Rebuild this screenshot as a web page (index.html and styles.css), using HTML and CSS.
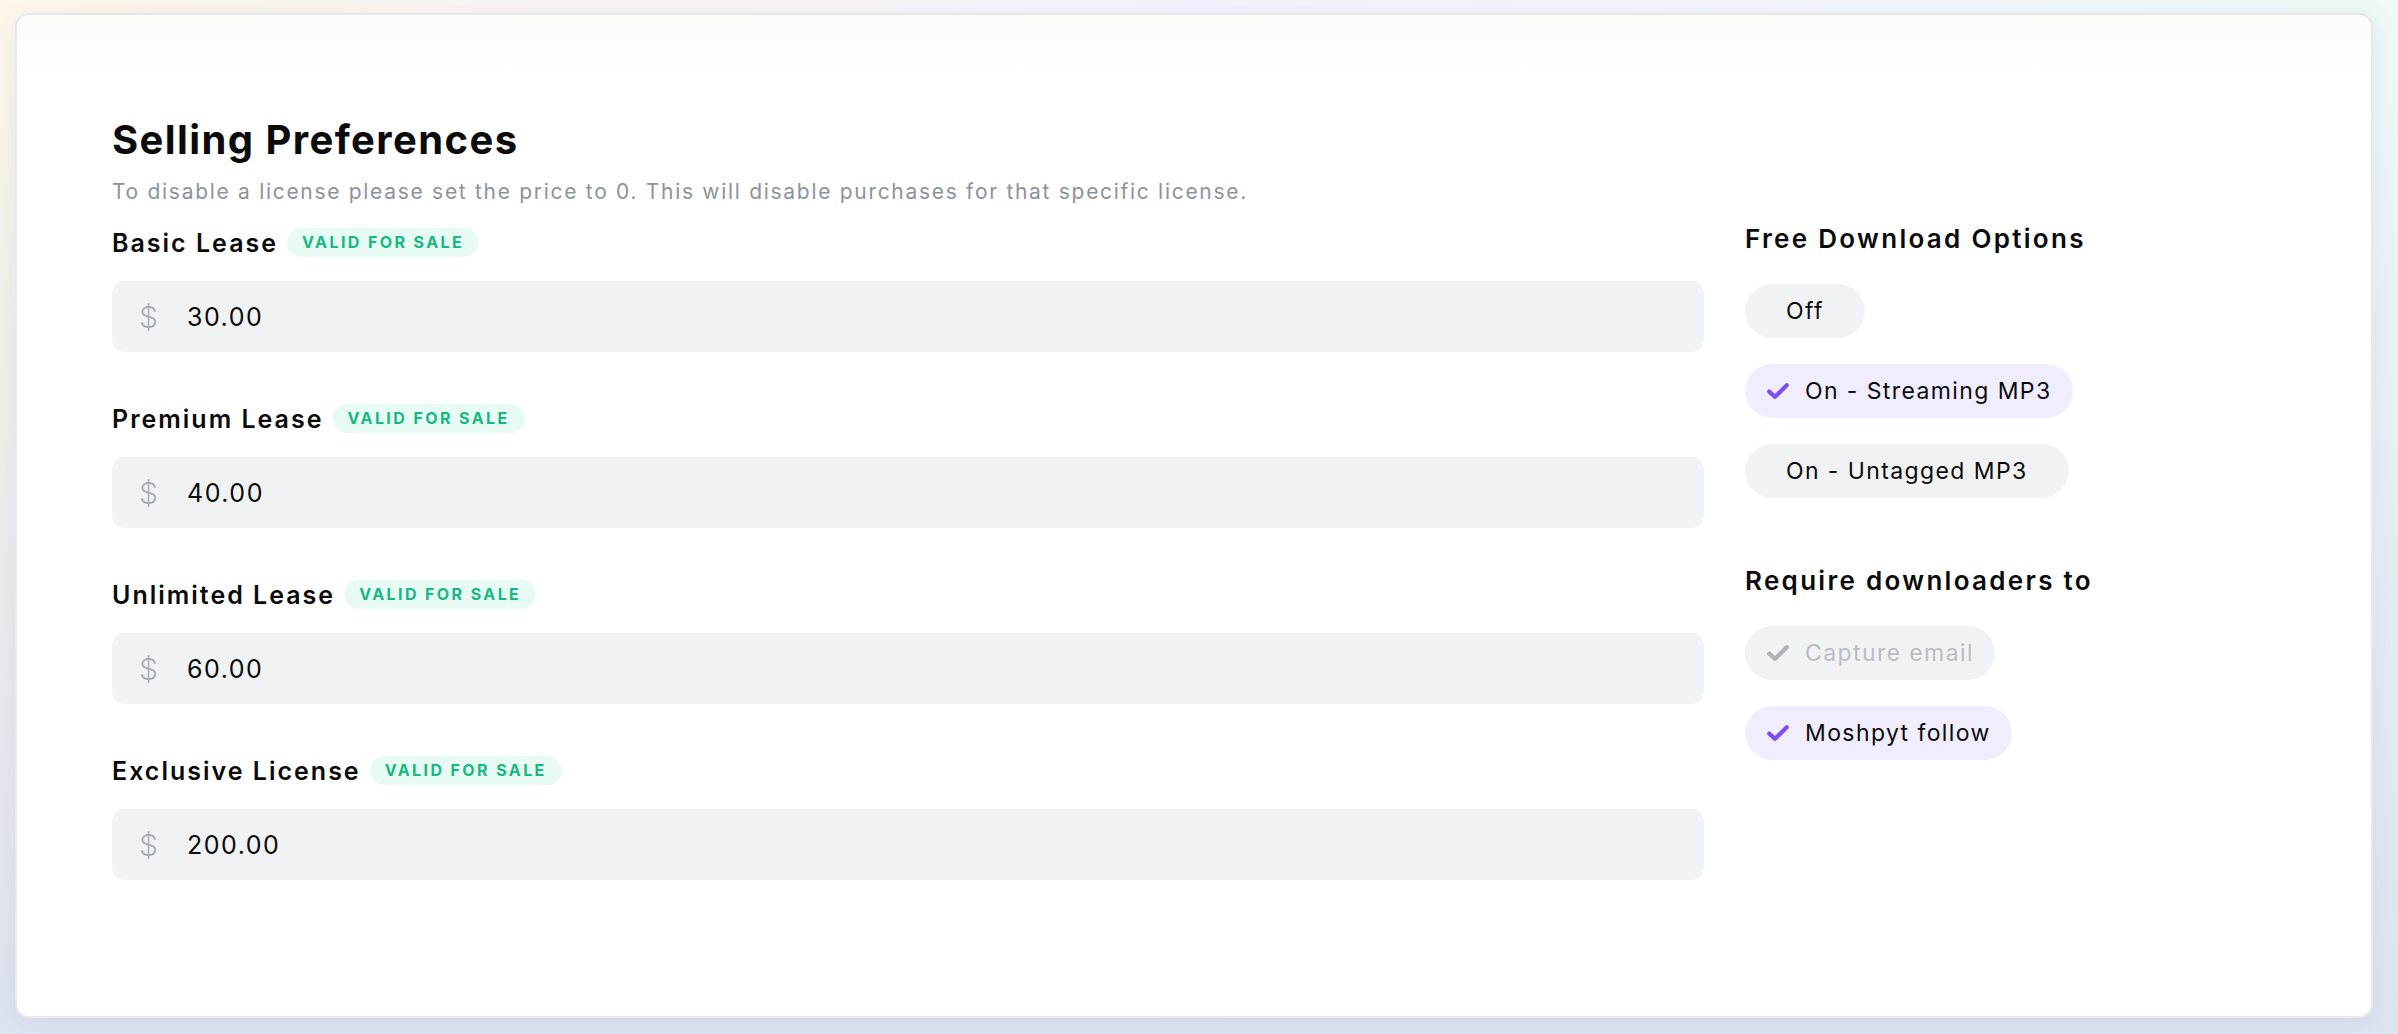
FILE: index.html
```html
<!DOCTYPE html>
<html lang="en">
<head>
  <meta charset="UTF-8" />
  <meta name="viewport" content="width=device-width, initial-scale=1.0" />
  <title>Selling Preferences</title>
  <link rel="stylesheet" href="styles.css">
</head>
<body>
  <div class="card">
    <h1>Selling Preferences</h1>
    <p class="subtitle">To disable a license please set the price to 0. This will disable purchases for that specific license.</p>

    <div class="columns">
      <div class="licenses">
        <div class="field">
          <div class="field-label">Basic Lease <span class="badge">Valid for sale</span></div>
          <div class="price"><span class="currency">$</span><input type="text" value="30.00" /></div>
        </div>
        <div class="field">
          <div class="field-label">Premium Lease <span class="badge">Valid for sale</span></div>
          <div class="price"><span class="currency">$</span><input type="text" value="40.00" /></div>
        </div>
        <div class="field">
          <div class="field-label">Unlimited Lease <span class="badge">Valid for sale</span></div>
          <div class="price"><span class="currency">$</span><input type="text" value="60.00" /></div>
        </div>
        <div class="field">
          <div class="field-label">Exclusive License <span class="badge">Valid for sale</span></div>
          <div class="price"><span class="currency">$</span><input type="text" value="200.00" /></div>
        </div>
      </div>

      <div class="options">
        <h2>Free Download Options</h2>
        <div class="pills">
          <button class="pill">Off</button>
          <button class="pill active">
            <svg viewBox="0 0 24 24"><polyline points="4.5 12.5 9.5 17 19.5 7"/></svg>
            On - Streaming MP3
          </button>
          <button class="pill">On - Untagged MP3</button>
        </div>

        <h2>Require downloaders to</h2>
        <div class="pills">
          <button class="pill disabled">
            <svg viewBox="0 0 24 24"><polyline points="4.5 12.5 9.5 17 19.5 7"/></svg>
            Capture email
          </button>
          <button class="pill active">
            <svg viewBox="0 0 24 24"><polyline points="4.5 12.5 9.5 17 19.5 7"/></svg>
            Moshpyt follow
          </button>
        </div>
      </div>
    </div>
  </div>
</body>
</html>
```

FILE: styles.css
```css
html, body {
  height: 100%;
}
body {
  margin: 0;
  padding: 13px 25px 16px 15px;
  box-sizing: border-box;
  display: flex;
  flex-direction: column;
  font-family: Inter, "Noto Sans", Arial, sans-serif;
  color: #0b0b0c;
  background:
    linear-gradient(to bottom, rgba(221, 227, 239, 0) 0%, rgba(221, 227, 239, 0.5) 50%, #dde3ef 100%),
    linear-gradient(to right, #fdf7ea 0%, #f6f1fd 50%, #eef9f8 100%);
}
.card {
  flex: 1;
  background: linear-gradient(to bottom, #fdfbf8 0, #fff 60px);
  border: 2px solid #e7e8ec;
  border-radius: 14px;
  box-shadow: 0 4px 24px rgba(120, 135, 170, 0.12);
  padding: 103px 96px 0 95px;
}
h1 {
  margin: 0;
  font-size: 40px;
  line-height: 44px;
  font-weight: 700;
  letter-spacing: 1.4px;
}
.subtitle {
  margin: 16px 0 0;
  font-size: 21px;
  line-height: 28px;
  color: #8e929b;
  letter-spacing: 1.7px;
}
.columns {
  display: grid;
  grid-template-columns: 1592px 1fr;
  gap: 41px;
  margin-top: 22px;
}
.field {
  margin-bottom: 52px;
}
.field-label {
  display: flex;
  align-items: center;
  height: 29px;
  font-size: 25px;
  font-weight: 600;
  letter-spacing: 2px;
  margin-bottom: 24px;
}
.badge {
  margin-left: 9px;
  padding: 0 15px;
  height: 29px;
  line-height: 29px;
  border-radius: 15px;
  background: #e7faf3;
  color: #17b883;
  font-size: 16px;
  font-weight: 700;
  text-transform: uppercase;
  letter-spacing: 2.4px;
}
.price {
  display: flex;
  align-items: center;
  height: 71px;
  background: #f1f2f4;
  border-radius: 12px;
  padding-left: 27px;
}
.currency {
  width: 48px;
  color: #a9afb8;
  font-size: 30px;
  font-weight: 300;
}
.price input {
  flex: 1;
  border: none;
  background: transparent;
  font-family: inherit;
  font-size: 25px;
  color: #0b0b0c;
  outline: none;
  padding: 0;
  letter-spacing: 1.5px;
}
h2 {
  margin: 0;
  font-size: 26px;
  line-height: 22px;
  font-weight: 600;
  letter-spacing: 2.3px;
}
.pills {
  display: flex;
  flex-direction: column;
  align-items: flex-start;
  gap: 26px;
  margin: 34px 0 72px;
}
.pill {
  display: flex;
  align-items: center;
  height: 54px;
  padding: 0 41px;
  border: none;
  border-radius: 27px;
  background: #f1f2f4;
  font-family: inherit;
  font-size: 23px;
  color: #0b0b0c;
  letter-spacing: 1.4px;
  cursor: pointer;
}
.pill svg {
  width: 28px;
  height: 28px;
  margin-right: 13px;
  fill: none;
  stroke: currentColor;
  stroke-width: 3.6;
  stroke-linecap: round;
  stroke-linejoin: round;
}
.pill.active,
.pill.disabled {
  padding-left: 19px;
  padding-right: 21px;
}
.pill.active {
  background: #f0eefe;
}
.pill.active svg {
  color: #7b4ff0;
}
.pill.disabled {
  color: #b9bdc4;
}
.pill.disabled svg {
  color: #aeb3ba;
}
```
